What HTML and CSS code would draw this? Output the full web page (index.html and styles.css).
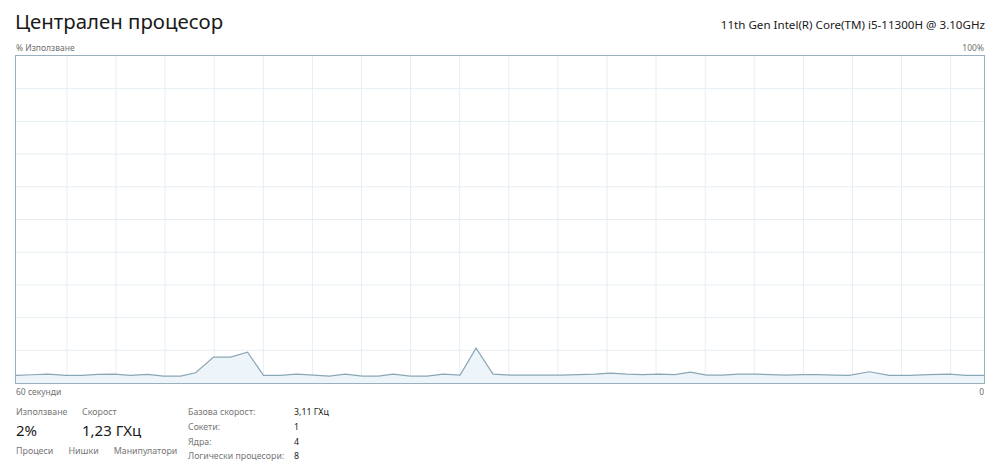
FILE: index.html
```html
<!DOCTYPE html>
<html lang="bg">
<head>
<meta charset="utf-8">
<title>Централен процесор</title>
<link rel="stylesheet" href="styles.css">
</head>
<body>
<div class="page">
  <header class="header">
    <h1 class="title">Централен процесор</h1>
    <div class="model">11th Gen Intel(R) Core(TM) i5-11300H @ 3.10GHz</div>
  </header>
  <div class="axis-row top">
    <span>% Използване</span>
    <span>100%</span>
  </div>
  <div class="graph">
    <svg class="graph-svg" viewBox="0 0 970 329" preserveAspectRatio="none">
      <g class="grid">
        <line x1="51" y1="0" x2="51" y2="329"/>
        <line x1="100.2" y1="0" x2="100.2" y2="329"/>
        <line x1="149.4" y1="0" x2="149.4" y2="329"/>
        <line x1="198.6" y1="0" x2="198.6" y2="329"/>
        <line x1="247.8" y1="0" x2="247.8" y2="329"/>
        <line x1="297" y1="0" x2="297" y2="329"/>
        <line x1="346.2" y1="0" x2="346.2" y2="329"/>
        <line x1="395.4" y1="0" x2="395.4" y2="329"/>
        <line x1="444.6" y1="0" x2="444.6" y2="329"/>
        <line x1="493.8" y1="0" x2="493.8" y2="329"/>
        <line x1="543" y1="0" x2="543" y2="329"/>
        <line x1="592.2" y1="0" x2="592.2" y2="329"/>
        <line x1="641.4" y1="0" x2="641.4" y2="329"/>
        <line x1="690.6" y1="0" x2="690.6" y2="329"/>
        <line x1="739.8" y1="0" x2="739.8" y2="329"/>
        <line x1="789" y1="0" x2="789" y2="329"/>
        <line x1="838.2" y1="0" x2="838.2" y2="329"/>
        <line x1="887.4" y1="0" x2="887.4" y2="329"/>
        <line x1="936.6" y1="0" x2="936.6" y2="329"/>
        <line x1="0" y1="32.9" x2="970" y2="32.9"/>
        <line x1="0" y1="65.8" x2="970" y2="65.8"/>
        <line x1="0" y1="98.7" x2="970" y2="98.7"/>
        <line x1="0" y1="131.6" x2="970" y2="131.6"/>
        <line x1="0" y1="164.5" x2="970" y2="164.5"/>
        <line x1="0" y1="197.4" x2="970" y2="197.4"/>
        <line x1="0" y1="230.3" x2="970" y2="230.3"/>
        <line x1="0" y1="263.2" x2="970" y2="263.2"/>
        <line x1="0" y1="296.1" x2="970" y2="296.1"/>
      </g>
      <polygon class="area" points="0,329 0,321.3 16.7,320.7 31.7,320 50,321.3 66.7,321.3 81.7,320.3 98,320 115,321.3 131.7,320.3 148,322 165,322 180,318.7 198,303 215,303 232,298 248,321.3 265,321.3 281,320 298,321 314,322 330,320 347,322 363,322 378,320 395,322 412,322 428,320 445,321 461,294 478,320 495,321 515,321 530,321 547,321 563,320.5 580,320 596,319 612,320 628,320.5 644,320 660,320.5 676,318 692,321 708,321 724,320 740,320 756,320.5 772,321 788,320.5 804,320.5 820,321 835,321.3 855,317.7 875,321.3 895,321.3 915,320.5 935,320 952,321.3 970,321.3 970,329"/>
      <polyline class="line" points="0,321.3 16.7,320.7 31.7,320 50,321.3 66.7,321.3 81.7,320.3 98,320 115,321.3 131.7,320.3 148,322 165,322 180,318.7 198,303 215,303 232,298 248,321.3 265,321.3 281,320 298,321 314,322 330,320 347,322 363,322 378,320 395,322 412,322 428,320 445,321 461,294 478,320 495,321 515,321 530,321 547,321 563,320.5 580,320 596,319 612,320 628,320.5 644,320 660,320.5 676,318 692,321 708,321 724,320 740,320 756,320.5 772,321 788,320.5 804,320.5 820,321 835,321.3 855,317.7 875,321.3 895,321.3 915,320.5 935,320 952,321.3 970,321.3"/>
    </svg>
  </div>
  <div class="axis-row bottom">
    <span>60 секунди</span>
    <span>0</span>
  </div>
  <section class="stats">
    <div class="live">
      <div class="pair">
        <div class="stat first">
          <div class="label">Използване</div>
          <div class="value">2%</div>
        </div>
        <div class="stat">
          <div class="label">Скорост</div>
          <div class="value">1,23 ГХц</div>
        </div>
      </div>
      <div class="counts">
        <span class="label">Процеси</span>
        <span class="label">Нишки</span>
        <span class="label">Манипулатори</span>
      </div>
    </div>
    <dl class="specs">
      <dt>Базова скорост:</dt><dd>3,11 ГХц</dd>
      <dt>Сокети:</dt><dd>1</dd>
      <dt>Ядра:</dt><dd>4</dd>
      <dt>Логически процесори:</dt><dd>8</dd>
    </dl>
  </section>
</div>
</body>
</html>
```

FILE: styles.css
```css
html, body {
  margin: 0;
  padding: 0;
  background: #ffffff;
}

body {
  font-family: "Noto Sans", "Open Sans", sans-serif;
  color: #1b1b1b;
  overflow: hidden;
}

.page {
  padding: 0 15px;
}

.header {
  display: flex;
  justify-content: space-between;
  align-items: baseline;
  height: 40px;
  padding-top: 5px;
  box-sizing: border-box;
}

.title {
  margin: 0;
  font-size: 20.4px;
  font-weight: 400;
  line-height: 32px;
  color: #1a1a1a;
}

.model {
  font-size: 11.6px;
  color: #1a1a1a;
}

.axis-row {
  display: flex;
  justify-content: space-between;
  font-size: 8.5px;
  color: #707070;
  padding: 0 1px;
}

.axis-row.top {
  height: 15px;
  line-height: 15px;
}

.axis-row.bottom {
  height: 16px;
  line-height: 16px;
}

.graph {
  height: 329px;
  border: 1px solid #9ab0bf;
  box-sizing: border-box;
}

.graph-svg {
  display: block;
  width: 100%;
  height: 100%;
}

.grid line {
  stroke: #e6eef3;
  stroke-width: 1;
  vector-effect: non-scaling-stroke;
}

.area {
  fill: #eef5fa;
}

.line {
  fill: none;
  stroke: #8aa6b6;
  stroke-width: 1.2;
  vector-effect: non-scaling-stroke;
}

.stats {
  display: flex;
  padding-top: 5px;
  padding-left: 1px;
}

.live {
  width: 172px;
}

.pair {
  display: flex;
}

.stat.first {
  width: 66px;
}

.label {
  font-size: 8.9px;
  color: #777777;
  line-height: 14px;
  white-space: nowrap;
}

.value {
  font-size: 15px;
  line-height: 22px;
  color: #1a1a1a;
}

.counts {
  display: flex;
  gap: 15px;
  padding-top: 3px;
}

.specs {
  margin: 0;
  display: grid;
  grid-template-columns: 106px auto;
  font-size: 8.8px;
  line-height: 14.8px;
}

.specs dt {
  color: #777777;
  white-space: nowrap;
}

.specs dd {
  margin: 0;
  color: #1a1a1a;
}
```
